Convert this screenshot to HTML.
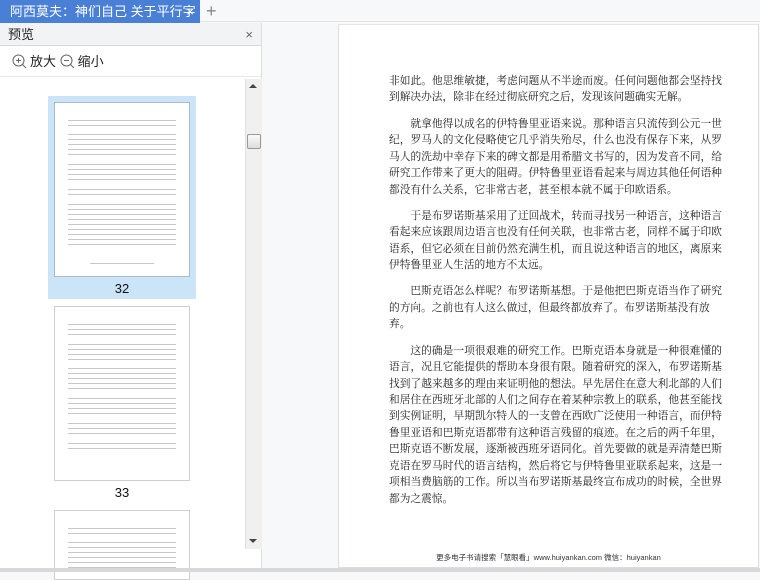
<!DOCTYPE html>
<html><head><meta charset="utf-8"><style>
*{margin:0;padding:0;box-sizing:border-box}
body{width:760px;height:572px;overflow:hidden;background:#f7f8fa;font-family:"Liberation Sans","Noto Sans CJK SC",sans-serif;position:relative}
.tabbar{position:absolute;left:0;top:0;width:760px;height:22px;background:#f7f8fa;border-bottom:1px solid #e3e3e3}
.tab{position:absolute;left:0;top:0;width:200px;height:23px;background:#4a7fd6;color:#fff;font-size:13px;line-height:23px;padding-left:10px;white-space:nowrap;overflow:hidden}
.tab span{position:absolute;right:6px;top:0}
.plus{position:absolute;left:206px;top:0;color:#888;font-size:18px;line-height:22px}
.left{position:absolute;left:0;top:23px;width:262px;height:549px;background:#fff;border-right:1px solid #ddd}
.hdr{height:23px;background:#f2f3f5;border-bottom:1px solid #dcdcdc;font-size:13px;line-height:23px;padding-left:8px;color:#222;position:relative}
.hdr span{position:absolute;right:8px;top:0;color:#666}
.tools{height:31px;border-bottom:1px solid #e8e8e8;font-size:13px;line-height:31px;padding-left:12px;color:#222}
.tools svg{vertical-align:-3px;margin-right:3px}
.sb{position:absolute;left:245px;top:79px;width:17px;height:470px;background:#f0f0f0;border-left:1px solid #e0e0e0}
.thumb{position:absolute;background:#fff;border:1px solid #cfcfcf}
.lines{position:absolute;left:13px;right:13px;background:repeating-linear-gradient(#999 0 1px,transparent 1px 5px);opacity:.55}
.num{position:absolute;font-size:13px;color:#111;width:148px;text-align:center}
.page{position:absolute;left:338px;top:24px;width:421px;height:544px;background:#fff;border:1px solid #ddd;border-top:1px solid #e5e5e5;overflow:hidden}
.txt{position:absolute;left:50px;top:48px;width:333px;font-family:"Liberation Serif","Noto Serif CJK SC",serif;font-size:10.7px;line-height:16.45px;color:#222}
.txt div{white-space:nowrap;text-align:justify;text-align-last:justify;height:16.45px}
.txt div.l{text-align-last:left}
.txt div.i{padding-left:21.4px}
.txt .g{margin-bottom:9.9px}
.foot{position:absolute;left:0;width:100%;top:527px;text-align:center;font-size:7.5px;color:#333}
.bot{position:absolute;left:0;top:568px;width:760px;height:4px;background:#d8d8d8}
</style></head><body>
<div class="tabbar"><div class="tab">阿西莫夫：神们自己 关于平行宇<span>×</span></div><div class="plus">+</div></div>
<div class="left">
<div class="hdr">预览<span>×</span></div>
<div class="tools"><svg width="15" height="15" viewBox="0 0 15 15"><circle cx="6.5" cy="6.5" r="5.5" fill="none" stroke="#666"/><path d="M4 6.5h5M6.5 4v5M10.5 10.5l3.5 3.5" stroke="#666"/></svg>放大 <svg width="15" height="15" viewBox="0 0 15 15"><circle cx="6.5" cy="6.5" r="5.5" fill="none" stroke="#666"/><path d="M4 6.5h5M10.5 10.5l3.5 3.5" stroke="#666"/></svg>缩小</div>
</div>
<div style="position:absolute;left:48px;top:96px;width:148px;height:203px;background:#cce4f8"></div>
<div class="thumb" style="left:54px;top:102px;width:136px;height:175px;border-color:#a9bccf">
<div class="lines" style="top:17px;height:9px"></div>
<div class="lines" style="top:31px;height:24px"></div>
<div class="lines" style="top:61px;height:19px"></div>
<div class="lines" style="top:86px;height:9px"></div>
<div class="lines" style="top:101px;height:44px"></div>
<div class="lines" style="top:160px;height:1px;left:35px;right:35px"></div>
</div>
<div class="num" style="left:48px;top:281px">32</div>
<div class="thumb" style="left:54px;top:306px;width:136px;height:175px">
<div class="lines" style="top:17px;height:14px"></div>
<div class="lines" style="top:37px;height:19px"></div>
<div class="lines" style="top:61px;height:24px"></div>
<div class="lines" style="top:91px;height:19px"></div>
<div class="lines" style="top:116px;height:14px"></div>
<div class="lines" style="top:136px;height:9px"></div>
</div>
<div class="num" style="left:48px;top:485px">33</div>
<div class="thumb" style="left:54px;top:510px;width:136px;height:70px">
<div class="lines" style="top:17px;height:9px"></div>
<div class="lines" style="top:31px;height:30px"></div>
</div>
<div class="sb">
<div style="position:absolute;left:3px;top:5px;width:0;height:0;border:4px solid transparent;border-bottom:4px solid #444;border-top:0"></div>
<div style="position:absolute;left:1px;top:55px;width:14px;height:15px;background:linear-gradient(#fafafa,#ddd);border:1px solid #999;border-radius:2px"></div>
<div style="position:absolute;left:3px;top:460px;width:0;height:0;border:4px solid transparent;border-top:4px solid #444;border-bottom:0"></div>
</div>
<div class="page">
<div class="txt">
<div>非如此。他思维敏捷，考虑问题从不半途而废。任何问题他都会坚持找</div>
<div class="l g">到解决办法，除非在经过彻底研究之后，发现该问题确实无解。</div>
<div class="i">就拿他得以成名的伊特鲁里亚语来说。那种语言只流传到公元一世</div>
<div>纪，罗马人的文化侵略使它几乎消失殆尽，什么也没有保存下来，从罗</div>
<div>马人的洗劫中幸存下来的碑文都是用希腊文书写的，因为发音不同，给</div>
<div>研究工作带来了更大的阻碍。伊特鲁里亚语看起来与周边其他任何语种</div>
<div class="l g">都没有什么关系，它非常古老，甚至根本就不属于印欧语系。</div>
<div class="i">于是布罗诺斯基采用了迂回战术，转而寻找另一种语言，这种语言</div>
<div>看起来应该跟周边语言也没有任何关联，也非常古老，同样不属于印欧</div>
<div>语系，但它必须在目前仍然充满生机，而且说这种语言的地区，离原来</div>
<div class="l g">伊特鲁里亚人生活的地方不太远。</div>
<div class="i">巴斯克语怎么样呢？布罗诺斯基想。于是他把巴斯克语当作了研究</div>
<div class="l">的方向。之前也有人这么做过，但最终都放弃了。布罗诺斯基没有放</div>
<div class="l g">弃。</div>
<div class="i">这的确是一项很艰难的研究工作。巴斯克语本身就是一种很难懂的</div>
<div>语言，况且它能提供的帮助本身很有限。随着研究的深入，布罗诺斯基</div>
<div>找到了越来越多的理由来证明他的想法。早先居住在意大利北部的人们</div>
<div>和居住在西班牙北部的人们之间存在着某种宗教上的联系，他甚至能找</div>
<div>到实例证明，早期凯尔特人的一支曾在西欧广泛使用一种语言，而伊特</div>
<div>鲁里亚语和巴斯克语都带有这种语言残留的痕迹。在之后的两千年里，</div>
<div>巴斯克语不断发展，逐渐被西班牙语同化。首先要做的就是弄清楚巴斯</div>
<div>克语在罗马时代的语言结构，然后将它与伊特鲁里亚联系起来，这是一</div>
<div>项相当费脑筋的工作。所以当布罗诺斯基最终宣布成功的时候，全世界</div>
<div class="l">都为之震惊。</div>
</div>
<div class="foot">更多电子书请搜索「慧眼看」www.huiyankan.com 微信：huiyankan</div>
</div>
<div class="bot"></div>
</body></html>
